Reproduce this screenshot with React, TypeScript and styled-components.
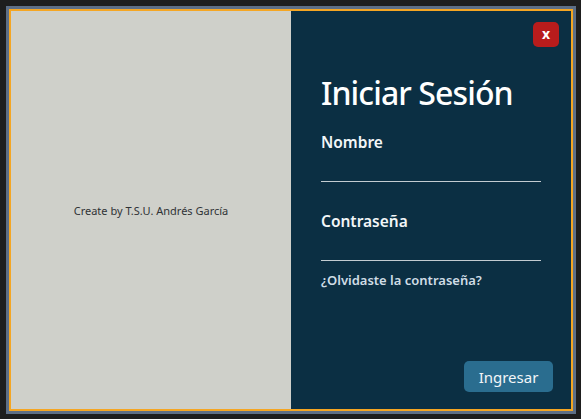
import React from "react";
import styled, { createGlobalStyle } from "styled-components";

const Global = createGlobalStyle`
  html, body { margin: 0; padding: 0; background: #1e1e1e; }
  body { font-family: "Noto Sans", "Open Sans", sans-serif; }
  #root { padding: 6px; }
`;

const Frame = styled.div`
  width: 564px;
  height: 402px;
  border: 3px solid #5e6f86;
`;

const Modal = styled.div`
  display: grid;
  grid-template-columns: 1fr 1fr;
  height: 100%;
  border: 2px solid #f5a623;
  box-sizing: border-box;
`;

const Side = styled.div`
  background: #cfd0ca;
  display: flex;
  align-items: center;
  justify-content: center;
`;

const Credit = styled.span`
  font-size: 11px;
  color: #2f3336;
`;

const Panel = styled.div`
  background: #0b2f43;
  display: flex;
  flex-direction: column;
  padding: 11px 18px 17px 30px;
  color: #ffffff;
`;

const TopRow = styled.div`
  display: flex;
  justify-content: flex-end;
  margin-right: -6px;
`;

const CloseButton = styled.button`
  width: 26px;
  height: 25px;
  border: none;
  border-radius: 5px;
  background: #b81c1c;
  color: #fff;
  font-family: inherit;
  font-weight: 700;
  font-size: 14px;
  line-height: 1;
  padding: 0 0 2px;
  cursor: pointer;
`;

const Title = styled.h1`
  margin: 25.6px 0 0;
  font-size: 32px;
  line-height: 40px;
  font-weight: 500;
  letter-spacing: -0.9px;
`;

const Label = styled.label<{ $gap: number }>`
  display: block;
  margin-top: ${(p) => p.$gap}px;
  font-size: 15.5px;
  line-height: 20px;
  font-weight: 600;
  color: #f2f6f8;
`;

const Input = styled.input`
  display: block;
  width: 220px;
  height: 30px;
  box-sizing: border-box;
  background: transparent;
  border: none;
  border-bottom: 1px solid #c3ccd1;
  outline: none;
  color: #fff;
  font-family: inherit;
`;

const Forgot = styled.a`
  margin-top: 9.6px;
  font-size: 13px;
  line-height: 18px;
  font-weight: 600;
  color: #d0dde6;
  text-decoration: none;
`;

const Submit = styled.button`
  margin-top: auto;
  align-self: flex-end;
  width: 89px;
  height: 31px;
  border: none;
  border-radius: 5px;
  background: #2a6d8f;
  color: #f2f6f8;
  font-family: inherit;
  font-size: 15px;
  cursor: pointer;
`;

export default function App() {
  return (
    <>
      <Global />
      <Frame>
        <Modal>
          <Side>
            <Credit>Create by T.S.U. Andrés García</Credit>
          </Side>
          <Panel>
            <TopRow>
              <CloseButton>x</CloseButton>
            </TopRow>
            <Title>Iniciar Sesión</Title>
            <Label $gap={19.2}>Nombre</Label>
            <Input type="text" />
            <Label $gap={29.5}>Contraseña</Label>
            <Input type="password" />
            <Forgot href="#">¿Olvidaste la contraseña?</Forgot>
            <Submit>Ingresar</Submit>
          </Panel>
        </Modal>
      </Frame>
    </>
  );
}
